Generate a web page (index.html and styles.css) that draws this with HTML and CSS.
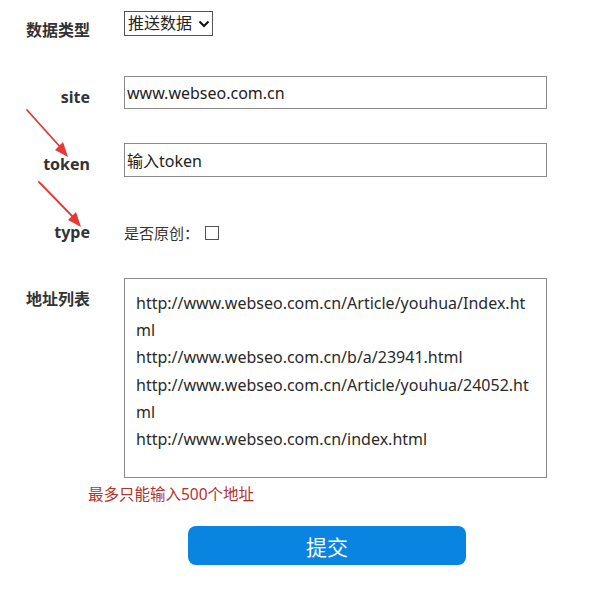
FILE: index.html
```html
<!DOCTYPE html>
<html lang="zh-CN">
<head>
<meta charset="utf-8">
<title>推送数据</title>
<link rel="stylesheet" href="styles.css">
</head>
<body>
<form class="form">
  <div class="row row-type">
    <label class="label label-select">数据类型</label>
    <span class="select-wrap">
      <select class="select"><option>推送数据</option></select>
      <svg class="chev" width="12" height="8" viewBox="0 0 12 8"><path d="M1.5 1.5 L6 6 L10.5 1.5" fill="none" stroke="#111" stroke-width="2"/></svg>
    </span>
  </div>
  <div class="row row-site">
    <label class="label">site</label>
    <input class="input" type="text" value="www.webseo.com.cn">
  </div>
  <div class="row row-token">
    <label class="label">token</label>
    <input class="input" type="text" value="输入token">
  </div>
  <div class="row row-check">
    <label class="label label-check">type</label>
    <span class="check-field">是否原创：<input class="check" type="checkbox"></span>
  </div>
  <div class="row row-list">
    <label class="label">地址列表</label>
    <textarea class="area">http://www.webseo.com.cn/Article/youhua/Index.html
http://www.webseo.com.cn/b/a/23941.html
http://www.webseo.com.cn/Article/youhua/24052.html
http://www.webseo.com.cn/index.html</textarea>
  </div>
  <p class="hint">最多只能输入500个地址</p>
  <div class="actions">
    <button type="button" class="submit">提交</button>
  </div>
</form>
<svg class="arrows" width="100" height="240" viewBox="0 0 100 240">
  <path d="M27 110 L62 149" stroke="#e53935" stroke-width="1.8" stroke-linecap="round"/>
  <path d="M68 157 L55 150 L63 142 Z" fill="#e53935"/>
  <path d="M39 182 L75 219" stroke="#e53935" stroke-width="1.8" stroke-linecap="round"/>
  <path d="M81 227 L68 220 L76 212 Z" fill="#e53935"/>
</svg>
</body>
</html>
```
FILE: styles.css
```css
html, body {
  margin: 0;
  padding: 0;
  background: #fff;
}
body {
  position: relative;
  width: 600px;
  height: 591px;
  overflow: hidden;
  font-family: "Noto Sans", "Noto Sans CJK SC", sans-serif;
  color: #222;
}
.form {
  display: flex;
  flex-direction: column;
  margin: 0;
}
.row {
  display: flex;
  align-items: flex-start;
  gap: 34px;
}
.label {
  width: 90px;
  flex: none;
  text-align: right;
  font-weight: bold;
  font-size: 16px;
  line-height: 20px;
  color: #333;
  padding-top: 11px;
  box-sizing: border-box;
}
.label-select { padding-top: 9px; }
.label-check { padding-top: 0; }
.row-type { margin-top: 11px; }
.row-site { margin-top: 36px; }
.row-token { margin-top: 34px; }
.row-check { margin-top: 45px; }
.row-list { margin-top: 35px; }

.select-wrap {
  position: relative;
  display: inline-block;
}
.select {
  appearance: none;
  -webkit-appearance: none;
  width: 89px;
  height: 25px;
  border: 1px solid #555;
  border-radius: 0;
  background: #fff;
  font-family: inherit;
  font-size: 16px;
  color: #222;
  padding: 0 0 0 3px;
  margin: 0;
  line-height: 23px;
}
.chev {
  position: absolute;
  right: 3px;
  top: 9px;
  pointer-events: none;
}
.input {
  width: 423px;
  height: 33px;
  box-sizing: border-box;
  border: 1px solid #8a8a8a;
  border-radius: 0;
  padding: 0 2px;
  margin: 0;
  font-family: inherit;
  font-size: 16px;
  color: #222;
  background: #fff;
}
.row-token .input { height: 34px; }
.check-field {
  display: flex;
  align-items: center;
  font-size: 15px;
  line-height: 20px;
  color: #333;
  padding-top: 1px;
}
.check {
  appearance: none;
  -webkit-appearance: none;
  width: 14px;
  height: 14px;
  border: 1px solid #555;
  background: #fff;
  margin: 0 0 0 6px;
  border-radius: 0;
}
.area {
  width: 423px;
  height: 200px;
  box-sizing: border-box;
  border: 1px solid #8a8a8a;
  border-radius: 0;
  padding: 11px 14px 11px 11px;
  margin: 0;
  font-family: inherit;
  font-size: 16px;
  line-height: 27.2px;
  color: #2a2a2a;
  resize: none;
  background: #fff;
  overflow: hidden;
  word-break: break-all;
}
.hint {
  margin: 6px 0 0 88px;
  font-size: 15.5px;
  line-height: 20px;
  color: #b5312c;
}
.actions {
  margin-top: 22px;
  padding-left: 188px;
}
.submit {
  width: 278px;
  height: 39px;
  border: none;
  border-radius: 8px;
  background: #0984e0;
  color: #fff;
  font-family: inherit;
  font-size: 21px;
  cursor: pointer;
}
.arrows {
  position: absolute;
  left: 0;
  top: 0;
}
```
